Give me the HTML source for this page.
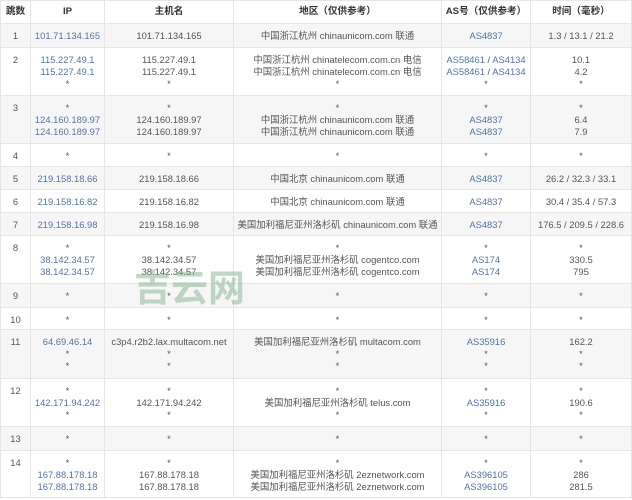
<!DOCTYPE html>
<html><head><meta charset="utf-8"><style>
body{margin:0;background:#fff;width:632px;height:500px;overflow:hidden;position:relative;font-family:"Liberation Sans","Noto Sans CJK SC",sans-serif;}
table{border-collapse:collapse;table-layout:fixed;width:631px;position:absolute;left:0;top:0;font-size:9.4px;color:#555;}
td,th{border:1px solid #e6e6e6;text-align:center;vertical-align:top;padding:6px 0 0 0;line-height:12px;overflow:hidden;white-space:nowrap;box-sizing:border-box;}
th{font-weight:bold;color:#333;vertical-align:middle;padding:0;font-size:9.6px;}
tr.g td{background:#f6f6f6;}
a{color:#5473a3;text-decoration:none;}
.wm{position:absolute;left:134px;top:265px;font-size:37px;font-weight:bold;color:rgba(130,178,140,0.5);font-family:"Noto Sans CJK SC",sans-serif;line-height:40px;}
</style></head><body>
<table>
<colgroup><col style="width:30px"><col style="width:74px"><col style="width:129px"><col style="width:208px"><col style="width:89px"><col style="width:101px"></colgroup>
<tr style="height:23px"><th>跳数</th><th>IP</th><th>主机名</th><th>地区（仅供参考）</th><th>AS号（仅供参考）</th><th>时间（毫秒）</th></tr>
<tr class="g" style="height:24px"><td>1</td><td><a>101.71.134.165</a></td><td>101.71.134.165</td><td>中国浙江杭州 chinaunicom.com 联通</td><td><a>AS4837</a></td><td>1.3 / 13.1 / 21.2</td></tr>
<tr style="height:48px"><td>2</td><td><a>115.227.49.1</a><br><a>115.227.49.1</a><br>*</td><td>115.227.49.1<br>115.227.49.1<br>*</td><td>中国浙江杭州 chinatelecom.com.cn 电信<br>中国浙江杭州 chinatelecom.com.cn 电信<br>*</td><td><a>AS58461</a> / <a>AS4134</a><br><a>AS58461</a> / <a>AS4134</a><br>*</td><td>10.1<br>4.2<br>*</td></tr>
<tr class="g" style="height:48px"><td>3</td><td>*<br><a>124.160.189.97</a><br><a>124.160.189.97</a></td><td>*<br>124.160.189.97<br>124.160.189.97</td><td>*<br>中国浙江杭州 chinaunicom.com 联通<br>中国浙江杭州 chinaunicom.com 联通</td><td>*<br><a>AS4837</a><br><a>AS4837</a></td><td>*<br>6.4<br>7.9</td></tr>
<tr style="height:23px"><td>4</td><td>*</td><td>*</td><td>*</td><td>*</td><td>*</td></tr>
<tr class="g" style="height:23px"><td>5</td><td><a>219.158.18.66</a></td><td>219.158.18.66</td><td>中国北京 chinaunicom.com 联通</td><td><a>AS4837</a></td><td>26.2 / 32.3 / 33.1</td></tr>
<tr style="height:23px"><td>6</td><td><a>219.158.16.82</a></td><td>219.158.16.82</td><td>中国北京 chinaunicom.com 联通</td><td><a>AS4837</a></td><td>30.4 / 35.4 / 57.3</td></tr>
<tr class="g" style="height:23px"><td>7</td><td><a>219.158.16.98</a></td><td>219.158.16.98</td><td>美国加利福尼亚州洛杉矶 chinaunicom.com 联通</td><td><a>AS4837</a></td><td>176.5 / 209.5 / 228.6</td></tr>
<tr style="height:48px"><td>8</td><td>*<br><a>38.142.34.57</a><br><a>38.142.34.57</a></td><td>*<br>38.142.34.57<br>38.142.34.57</td><td>*<br>美国加利福尼亚州洛杉矶 cogentco.com<br>美国加利福尼亚州洛杉矶 cogentco.com</td><td>*<br><a>AS174</a><br><a>AS174</a></td><td>*<br>330.5<br>795</td></tr>
<tr class="g" style="height:24px"><td>9</td><td>*</td><td>*</td><td>*</td><td>*</td><td>*</td></tr>
<tr style="height:22px"><td>10</td><td>*</td><td>*</td><td>*</td><td>*</td><td>*</td></tr>
<tr class="g" style="height:49px"><td>11</td><td><a>64.69.46.14</a><br>*<br>*</td><td>c3p4.r2b2.lax.multacom.net<br>*<br>*</td><td>美国加利福尼亚州洛杉矶 multacom.com<br>*<br>*</td><td><a>AS35916</a><br>*<br>*</td><td>162.2<br>*<br>*</td></tr>
<tr style="height:48px"><td>12</td><td>*<br><a>142.171.94.242</a><br>*</td><td>*<br>142.171.94.242<br>*</td><td>*<br>美国加利福尼亚州洛杉矶 telus.com<br>*</td><td>*<br><a>AS35916</a><br>*</td><td>*<br>190.6<br>*</td></tr>
<tr class="g" style="height:24px"><td>13</td><td>*</td><td>*</td><td>*</td><td>*</td><td>*</td></tr>
<tr style="height:47px"><td>14</td><td>*<br><a>167.88.178.18</a><br><a>167.88.178.18</a></td><td>*<br>167.88.178.18<br>167.88.178.18</td><td>*<br>美国加利福尼亚州洛杉矶 2eznetwork.com<br>美国加利福尼亚州洛杉矶 2eznetwork.com</td><td>*<br><a>AS396105</a><br><a>AS396105</a></td><td>*<br>286<br>281.5</td></tr>
</table>
<div class="wm">吉云网</div>
</body></html>
